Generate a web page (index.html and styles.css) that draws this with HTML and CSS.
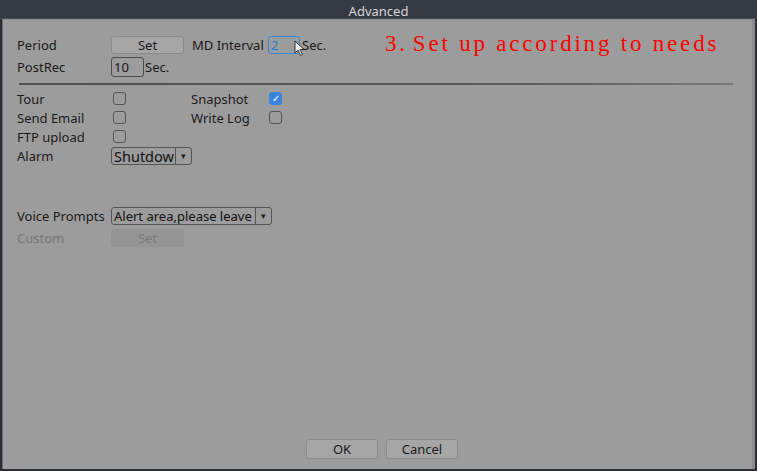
FILE: index.html
```html
<html>
<head>
<title>Advanced</title>
<link rel="stylesheet" href="styles.css">
</head>
<body>
<div class="win">
  <div class="titlebar">Advanced</div>
  <div class="panel">
    <div class="top">
      <div class="grid">
        <div class="row r1">
          <span class="lbl">Period</span>
          <span class="btn wide">Set</span>
          <span class="lbl2">MD Interval</span>
          <span class="field focus">2</span>
          <svg class="cursor" width="11" height="17" viewBox="0 0 11 17"><path d="M1 1 L1 13 L4 10 L6.5 15.5 L8.5 14.5 L6 9.5 L10 9.5 Z" fill="#eee" stroke="#333" stroke-width="1"/></svg>
          <span class="unit">Sec.</span>
        </div>
        <div class="row r2">
          <span class="lbl">PostRec</span>
          <span class="field small">10</span>
          <span class="unit">Sec.</span>
        </div>
      </div>
      <div class="note">3.<span class="sp"></span>Set up according to needs</div>
    </div>
    <div class="sep"></div>
    <div class="checks">
      <div class="row cr"><span class="lbl">Tour</span><span class="box"></span><span class="lbl2 gap">Snapshot</span><span class="box on">&#10003;</span></div>
      <div class="row cr"><span class="lbl">Send Email</span><span class="box"></span><span class="lbl2 gap">Write Log</span><span class="box"></span></div>
      <div class="row cr"><span class="lbl">FTP upload</span><span class="box"></span></div>
      <div class="row cr"><span class="lbl">Alarm</span><span class="select alarm"><span class="val">Shutdown</span><span class="arr">&#9662;</span></span></div>
    </div>
    <div class="voice">
      <div class="row vr"><span class="lbl">Voice Prompts</span><span class="select prompt"><span class="val">Alert area,please leave</span><span class="arr">&#9662;</span></span></div>
      <div class="row vr dim"><span class="lbl">Custom</span><span class="btn wide off">Set</span></div>
    </div>
    <div class="actions">
      <span class="btn act">OK</span>
      <span class="btn act">Cancel</span>
    </div>
  </div>
</div>
</body>
</html>
```

FILE: styles.css
```css
body {
  margin: 0;
  background: #2b2e33;
  font-family: "Noto Sans", "Open Sans", sans-serif;
  font-size: 13px;
  color: #1a1a1a;
}
.win {
  width: 757px;
  height: 471px;
  display: flex;
  flex-direction: column;
}
.titlebar {
  height: 18px;
  line-height: 23px;
  background: #353942;
  color: #d8d8d8;
  text-align: center;
  font-size: 13px;
  border-bottom: 1px solid #4a4d52;
}
.panel {
  flex: 1;
  background: #9c9c9c;
  margin: 0 2px 2px 2px;
  border-left: 1px solid #6e6e6e;
  border-right: 3px solid #8a8a8a;
  border-top: 1px solid #8e8e8e;
  display: flex;
  flex-direction: column;
  padding: 3px 0 0 14px;
}
.top {
  display: flex;
  align-items: flex-start;
  padding-top: 13px;
}
.grid {
  width: 368px;
}
.row {
  display: flex;
  align-items: center;
}
.lbl {
  width: 94px;
}
.lbl2 {
  width: 76px;
  margin-left: 8px;
}
.r1 {
  height: 18px;
}
.r2 {
  height: 20px;
  margin-top: 3px;
}
.btn {
  display: inline-block;
  box-sizing: border-box;
  height: 18px;
  line-height: 16px;
  text-align: center;
  background: #a6a6a6;
  border: 1px solid #8b8b8b;
  border-radius: 3px;
}
.wide {
  width: 73px;
}
.field {
  box-sizing: border-box;
  height: 18px;
  line-height: 16px;
  border: 1px solid #5a5a5a;
  border-radius: 3px;
  padding-left: 2px;
}
.focus {
  width: 32px;
  border-color: #3c86d6;
  color: #2a78d0;
}
.small {
  width: 33px;
  height: 20px;
  line-height: 18px;
  border-color: #4a4a4a;
}
.cursor {
  margin: 4px 0 0 -6px;
  align-self: flex-start;
}
.unit {
  margin-left: 1px;
}
.r1 .unit {
  margin-left: -3px;
}
.note {
  margin-top: -5px;
  font-family: "Liberation Serif", serif;
  font-size: 23px;
  color: #ff0000;
  letter-spacing: 2.8px;
  white-space: nowrap;
}
.sp {
  display: inline-block;
  width: 5px;
}
.sep {
  margin: 6px 19px 0 2px;
  height: 2px;
  background: linear-gradient(to right, #505050 0%, #5a5a5a 70%, #7a7a7a 100%);
}
.checks {
  padding-top: 4px;
}
.cr {
  height: 19px;
}
.box {
  box-sizing: border-box;
  width: 13px;
  height: 13px;
  margin-left: 2px;
  border: 1px solid #555;
  border-radius: 3px;
  font-size: 10px;
  line-height: 11px;
  text-align: center;
  color: #fff;
}
.box.on {
  background: #3a86dc;
  border-color: #3a86dc;
}
.gap {
  margin-left: 65px;
}
.select {
  display: flex;
  box-sizing: border-box;
  height: 18px;
  border: 1px solid #555;
  border-radius: 3px;
  overflow: hidden;
}
.val {
  flex: 1;
  overflow: hidden;
  white-space: nowrap;
  padding-left: 2px;
  line-height: 16px;
  color: #111;
}
.alarm .val {
  font-size: 14.5px;
}
.arr {
  width: 15px;
  border-left: 1px solid #555;
  text-align: center;
  font-size: 9px;
  line-height: 16px;
}
.alarm {
  width: 81px;
  margin-top: 1px;
}
.prompt {
  width: 161px;
}
.voice {
  padding-top: 40px;
}
.vr {
  height: 22px;
}
.dim {
  color: #777;
}
.off {
  background: #959595;
  border-color: #939393;
  color: #7a7a7a;
}
.actions {
  margin-top: auto;
  display: flex;
  justify-content: center;
  gap: 8px;
  padding: 0 0 10px 0;
  margin-left: -5px;
}
.act {
  width: 72px;
  height: 20px;
  line-height: 18px;
}
```
